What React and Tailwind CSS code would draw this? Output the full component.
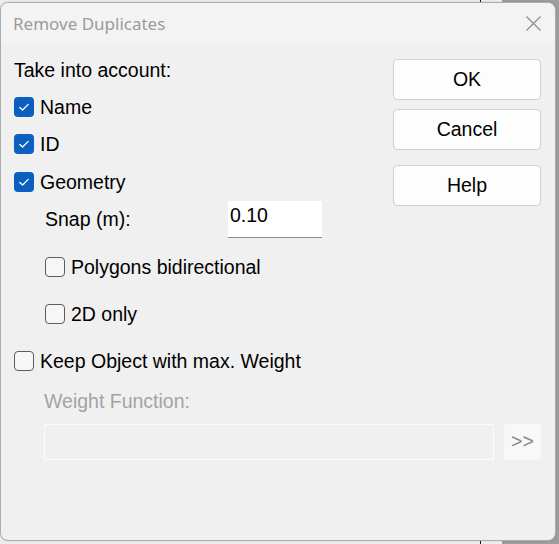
import React, { useState } from 'react';

const FONT = { fontFamily: '"Liberation Sans", Arial, sans-serif' };

// Win11-style checkbox with label
const CheckBox = ({ checked, onChange, label }) => (
  <label className="flex items-center cursor-default select-none" onClick={() => onChange(!checked)}>
    {checked ? (
      <span className="flex h-[20px] w-[20px] items-center justify-center rounded-[4px] bg-[#0b5fc0]">
        <svg width="20" height="20" viewBox="0 0 20 20" fill="none">
          <path d="M5.8 10.4 L8.6 13 L14.2 7.4" stroke="#ffffff" strokeWidth="1.3" strokeLinecap="round" strokeLinejoin="round" />
        </svg>
      </span>
    ) : (
      <span className="h-[20px] w-[20px] rounded-[4px] border border-[#5c5c5c] bg-[#f6f6f6]" />
    )}
    <span className="ml-[6px] text-[19.5px] leading-[24px] text-black">{label}</span>
  </label>
);

const DialogButton = ({ children, className = '' }) => (
  <button
    type="button"
    className={`flex w-[148px] items-center justify-center rounded-[4px] border border-[#d0d0d0] bg-[#fdfdfd] text-[19.5px] text-black ${className}`}
  >
    {children}
  </button>
);

export default function App() {
  const [name, setName] = useState(true);
  const [id, setId] = useState(true);
  const [geometry, setGeometry] = useState(true);
  const [polygons, setPolygons] = useState(false);
  const [only2d, setOnly2d] = useState(false);
  const [keepMax, setKeepMax] = useState(false);
  const [snap, setSnap] = useState('0.10');

  return (
    <div
      className="h-[544px] w-[559px] overflow-hidden pt-[2px] bg-[linear-gradient(to_right,#ededed_480px,#1a1a1a_480px,#1a1a1a_481px,#ededed_481px,#ededed_502px,#9d9d9d_502px)]"
      style={FONT}
    >
      <div className="flex h-[539px] w-[556px] flex-col overflow-hidden rounded-[8px] border border-[#adadad] bg-[#f0f0f0] shadow-[0_0_2px_rgba(0,0,0,0.15)]">
        {/* title bar */}
        <div className="flex h-[41px] shrink-0 items-center justify-between bg-[#f3f3f3] pl-[12px] pr-[14px]">
          <span className="text-[17px] text-[#9b9b9b]" style={{ fontFamily: '"Noto Sans", "Open Sans", sans-serif' }}>
            Remove Duplicates
          </span>
          <svg width="15" height="15" viewBox="0 0 15 15" fill="none">
            <path d="M0.5 0.5 L14.5 14.5 M14.5 0.5 L0.5 14.5" stroke="#8a8a8a" strokeWidth="1.1" />
          </svg>
        </div>

        {/* body */}
        <div className="flex flex-1 flex-col">
          <div className="flex">
            <div className="flex w-[379px] flex-col pl-[13px] pt-[9px]">
              <div className="flex h-[36px] items-center text-[19.5px] text-black">Take into account:</div>
              <div className="flex h-[36px] items-center">
                <CheckBox checked={name} onChange={setName} label="Name" />
              </div>
              <div className="flex h-[38px] items-center">
                <CheckBox checked={id} onChange={setId} label="ID" />
              </div>
              <div className="flex h-[38px] items-center">
                <CheckBox checked={geometry} onChange={setGeometry} label="Geometry" />
              </div>
              <div className="flex h-[37px] items-center pl-[31px]">
                <span className="w-[183px] text-[19.5px] text-black">Snap (m):</span>
                <input
                  value={snap}
                  onChange={(e) => setSnap(e.target.value)}
                  className="h-[37px] w-[94px] self-stretch border-b border-[#8a8a8a] bg-white px-[2px] pb-[10px] pt-[2px] text-[19.5px] leading-[24px] text-black outline-none"
                  style={FONT}
                />
              </div>
              <div className="flex h-[58px] items-center pl-[31px]">
                <CheckBox checked={polygons} onChange={setPolygons} label="Polygons bidirectional" />
              </div>
              <div className="flex h-[36px] items-center pl-[31px]">
                <CheckBox checked={only2d} onChange={setOnly2d} label="2D only" />
              </div>
              <div className="flex h-[58px] items-center">
                <CheckBox checked={keepMax} onChange={setKeepMax} label="Keep Object with max. Weight" />
              </div>
              <div className="flex h-[24px] items-center pl-[30px] text-[19.5px] text-[#a3a3a3]">Weight Function:</div>
            </div>

            <div className="flex flex-col pl-[13px] pt-[15px]">
              <DialogButton className="h-[41px]">OK</DialogButton>
              <DialogButton className="mt-[9px] h-[41px]">Cancel</DialogButton>
              <DialogButton className="mt-[15px] h-[41px]">Help</DialogButton>
            </div>
          </div>

          <div className="mt-[10px] flex items-center pl-[43px] pr-[14px]">
            <div className="h-[36px] flex-1 border border-[#fbfbfb] bg-[#f0f0f0]" />
            <button
              type="button"
              disabled
              className="ml-[10px] flex h-[36px] w-[37px] items-center justify-center rounded-[4px] bg-[#f8f8f8] text-[19.5px] text-[#878a93]"
            >
              &gt;&gt;
            </button>
          </div>
        </div>
      </div>
    </div>
  );
}
